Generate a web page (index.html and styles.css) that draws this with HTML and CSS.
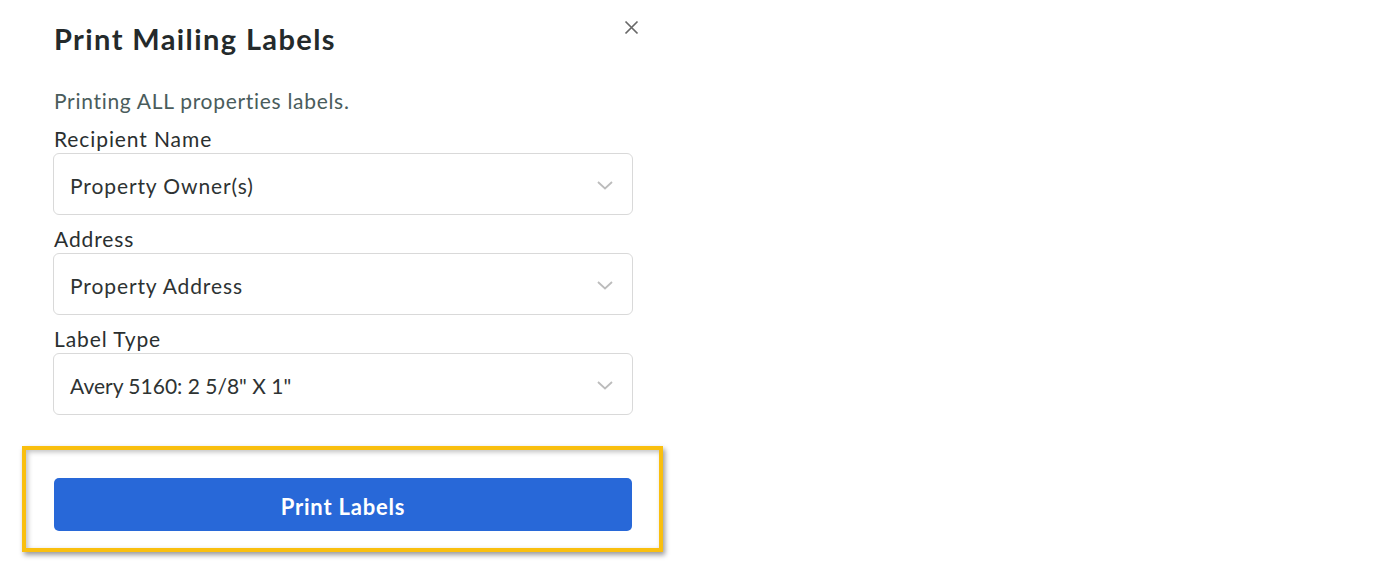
FILE: index.html
```html
<!DOCTYPE html>
<html lang="en">
<head>
<meta charset="utf-8">
<title>Print Mailing Labels</title>
<link rel="stylesheet" href="styles.css">
</head>
<body>
<div class="dialog">
  <div class="header">
    <h1 class="title">Print Mailing Labels</h1>
    <button class="close" aria-label="Close">
      <svg width="15" height="15" viewBox="0 0 15 15"><path d="M1.5 1.5 L13.5 13.5 M13.5 1.5 L1.5 13.5" stroke="#686868" stroke-width="1.7" fill="none"/></svg>
    </button>
  </div>
  <p class="subtitle">Printing ALL properties labels.</p>
  <div class="field">
    <div class="label">Recipient Name</div>
    <div class="select"><span class="value">Property Owner(s)</span>
      <svg class="chev" width="18" height="10" viewBox="0 0 18 10"><path d="M2 2 L9 8.5 L16 2" stroke="#bcbcbc" stroke-width="1.8" fill="none"/></svg>
    </div>
  </div>
  <div class="field">
    <div class="label">Address</div>
    <div class="select"><span class="value">Property Address</span>
      <svg class="chev" width="18" height="10" viewBox="0 0 18 10"><path d="M2 2 L9 8.5 L16 2" stroke="#bcbcbc" stroke-width="1.8" fill="none"/></svg>
    </div>
  </div>
  <div class="field">
    <div class="label">Label Type</div>
    <div class="select"><span class="value value-tight">Avery 5160: 2 5/8" X 1"</span>
      <svg class="chev" width="18" height="10" viewBox="0 0 18 10"><path d="M2 2 L9 8.5 L16 2" stroke="#bcbcbc" stroke-width="1.8" fill="none"/></svg>
    </div>
  </div>
  <div class="highlight">
    <button class="print">Print Labels</button>
  </div>
</div>
</body>
</html>
```
FILE: styles.css
```css
* { box-sizing: border-box; }
html, body { margin: 0; padding: 0; background: #ffffff; }
body {
  font-family: Lato, "Open Sans", sans-serif;
  color: #2b3030;
  width: 1388px;
  height: 566px;
  overflow: hidden;
}
.dialog {
  width: 580px;
  margin-left: 53px;
  padding-top: 20px;
  display: flex;
  flex-direction: column;
}
.header {
  display: flex;
  justify-content: space-between;
  align-items: flex-start;
}
.title {
  margin: 3px 0 0 1px;
  font-size: 29px;
  line-height: 32px;
  font-weight: 700;
  letter-spacing: 1.4px;
  color: #242a2b;
}
.close {
  border: 0;
  background: none;
  padding: 0;
  margin-right: -6px;
  width: 15px;
  height: 15px;
  display: block;
}
.close svg { display: block; }
.subtitle {
  margin: 33px 0 0 1px;
  font-size: 21px;
  line-height: 26px;
  letter-spacing: 0.7px;
  color: #4a5c5c;
}
.field {
  margin-top: 12px;
  display: flex;
  flex-direction: column;
  gap: 1px;
}
.field + .field { margin-top: 11px; }
.label {
  margin-left: 1px;
  font-size: 21px;
  line-height: 26px;
  letter-spacing: 0.9px;
  color: #2a2f30;
}
.select {
  height: 62px;
  border: 1px solid #d9d9d9;
  border-radius: 6px;
  display: flex;
  align-items: center;
  justify-content: space-between;
  padding: 0 18px 0 16px;
  font-size: 21px;
  line-height: 26px;
  letter-spacing: 0.9px;
  color: #2e3333;
}
.value { padding-top: 3px; }
.value-tight { letter-spacing: 0; }
.chev { display: block; margin-top: 1px; }
.highlight {
  margin-top: 31px;
  margin-left: -31px;
  width: 641px;
  border: 4px solid #f9bf0f;
  padding: 28px 27px 17px 28px;
  box-shadow: 2px 3px 5px rgba(0,0,0,0.4), inset 2px 2px 5px rgba(0,0,0,0.25);
}
.print {
  display: block;
  width: 100%;
  height: 53px;
  border: 0;
  border-radius: 5px;
  background: #2868d8;
  color: #ffffff;
  font-family: Lato, "Open Sans", sans-serif;
  font-size: 22px;
  font-weight: 700;
  letter-spacing: 0.8px;
  padding: 3px 0 0;
}
```
